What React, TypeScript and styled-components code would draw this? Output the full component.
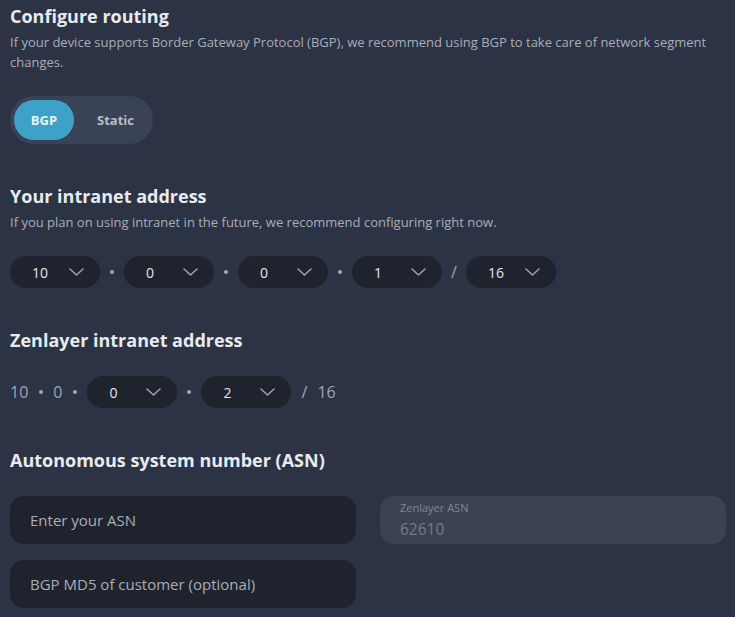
import React from "react";
import styled, { createGlobalStyle } from "styled-components";

const Global = createGlobalStyle`
  html, body { margin: 0; padding: 0; background: #2c3344; }
  body { font-family: "Open Sans", "Noto Sans", sans-serif; color: #e6e8ec; }
  * { box-sizing: border-box; }
`;

const Page = styled.div`
  width: 735px;
  min-height: 617px;
  padding: 4px 9px 0 10px;
  display: flex;
  flex-direction: column;
`;

const Section = styled.section<{ $mt?: number }>`
  display: flex;
  flex-direction: column;
  margin-top: ${(p) => p.$mt ?? 0}px;
`;

const Title = styled.h2`
  margin: 0;
  font-size: 18px;
  font-weight: 700;
  line-height: 24px;
  color: #e8eaee;
`;

const Sub = styled.p`
  margin: 4px 0 0;
  font-size: 13px;
  line-height: 20px;
  color: #a9aeb9;
`;

const Toggle = styled.div`
  margin-top: 24px;
  width: 143px;
  height: 48px;
  border-radius: 24px;
  background: #3a4257;
  padding: 4px;
  display: flex;
  align-items: center;
`;

const ToggleBtn = styled.div<{ $active?: boolean }>`
  height: 40px;
  border-radius: 20px;
  display: flex;
  align-items: center;
  justify-content: center;
  font-size: 13px;
  font-weight: 700;
  flex: ${(p) => (p.$active ? "0 0 60px" : "1")};
  padding-left: ${(p) => (p.$active ? "0" : "8px")};
  background: ${(p) => (p.$active ? "#3ea2c8" : "transparent")};
  color: ${(p) => (p.$active ? "#e9f4f9" : "#b9bec8")};
`;

const AddrRow = styled.div<{ $mt: number }>`
  margin-top: ${(p) => p.$mt}px;
  display: flex;
  align-items: center;
  height: 32px;
`;

const Select = styled.div`
  width: 90px;
  height: 32px;
  border-radius: 16px;
  background: #1f232d;
  display: flex;
  align-items: center;
  justify-content: space-between;
  padding: 0 16px 0 22px;
  font-size: 14px;
  color: #e4e6ea;
`;

const Sep = styled.span<{ $w?: number }>`
  width: ${(p) => p.$w ?? 24}px;
  display: flex;
  justify-content: center;
  align-items: center;
  color: #a0a6b2;
  font-size: 16px;
`;

const Dot = styled.span`
  width: 4px;
  height: 4px;
  border-radius: 50%;
  background: #a0a6b2;
`;

const Static = styled.span`
  font-size: 16px;
  color: #a0a6b2;
`;

const Grid = styled.div`
  margin-top: 24px;
  display: grid;
  grid-template-columns: 346px 346px;
  column-gap: 24px;
  row-gap: 16px;
`;

const Input = styled.div`
  height: 48px;
  border-radius: 14px;
  background: #1f232d;
  display: flex;
  align-items: center;
  padding: 0 20px;
  font-size: 15px;
  color: #a9aeb8;
`;

const ReadOnly = styled.div`
  height: 48px;
  border-radius: 14px;
  background: #3c4252;
  display: flex;
  flex-direction: column;
  justify-content: center;
  gap: 4px;
  padding: 0 20px;
`;

const RLabel = styled.span`
  font-size: 11px;
  line-height: 14px;
  color: #7f8594;
`;

const RValue = styled.span`
  font-size: 15.5px;
  line-height: 20px;
  color: #747a88;
`;

const Chevron = () => (
  <svg width="15" height="8" viewBox="0 0 15 8" fill="none">
    <path d="M1 1l6.5 6L14 1" stroke="#9ba1ac" strokeWidth="1.6" strokeLinecap="round" strokeLinejoin="round" />
  </svg>
);

const Sel = ({ v }: { v: string }) => (
  <Select>
    <span>{v}</span>
    <Chevron />
  </Select>
);

const DotSep = ({ w }: { w?: number }) => (
  <Sep $w={w}>
    <Dot />
  </Sep>
);

export default function App() {
  return (
    <>
      <Global />
      <Page>
        <Section>
          <Title>Configure routing</Title>
          <Sub>
            If your device supports Border Gateway Protocol (BGP), we recommend using BGP to take care of network segment
            changes.
          </Sub>
          <Toggle>
            <ToggleBtn $active>BGP</ToggleBtn>
            <ToggleBtn>Static</ToggleBtn>
          </Toggle>
        </Section>

        <Section $mt={40}>
          <Title>Your intranet address</Title>
          <Sub>If you plan on using intranet in the future, we recommend configuring right now.</Sub>
          <AddrRow $mt={24}>
            <Sel v="10" />
            <DotSep />
            <Sel v="0" />
            <DotSep />
            <Sel v="0" />
            <DotSep />
            <Sel v="1" />
            <Sep>/</Sep>
            <Sel v="16" />
          </AddrRow>
        </Section>

        <Section $mt={40}>
          <Title>Zenlayer intranet address</Title>
          <AddrRow $mt={24}>
            <Static>10</Static>
            <DotSep w={25} />
            <Static>0</Static>
            <DotSep w={25} />
            <Sel v="0" />
            <DotSep />
            <Sel v="2" />
            <Sep $w={26}>/</Sep>
            <Static>16</Static>
          </AddrRow>
        </Section>

        <Section $mt={40}>
          <Title>Autonomous system number (ASN)</Title>
          <Grid>
            <Input>Enter your ASN</Input>
            <ReadOnly>
              <RLabel>Zenlayer ASN</RLabel>
              <RValue>62610</RValue>
            </ReadOnly>
            <Input>BGP MD5 of customer (optional)</Input>
          </Grid>
        </Section>
      </Page>
    </>
  );
}
